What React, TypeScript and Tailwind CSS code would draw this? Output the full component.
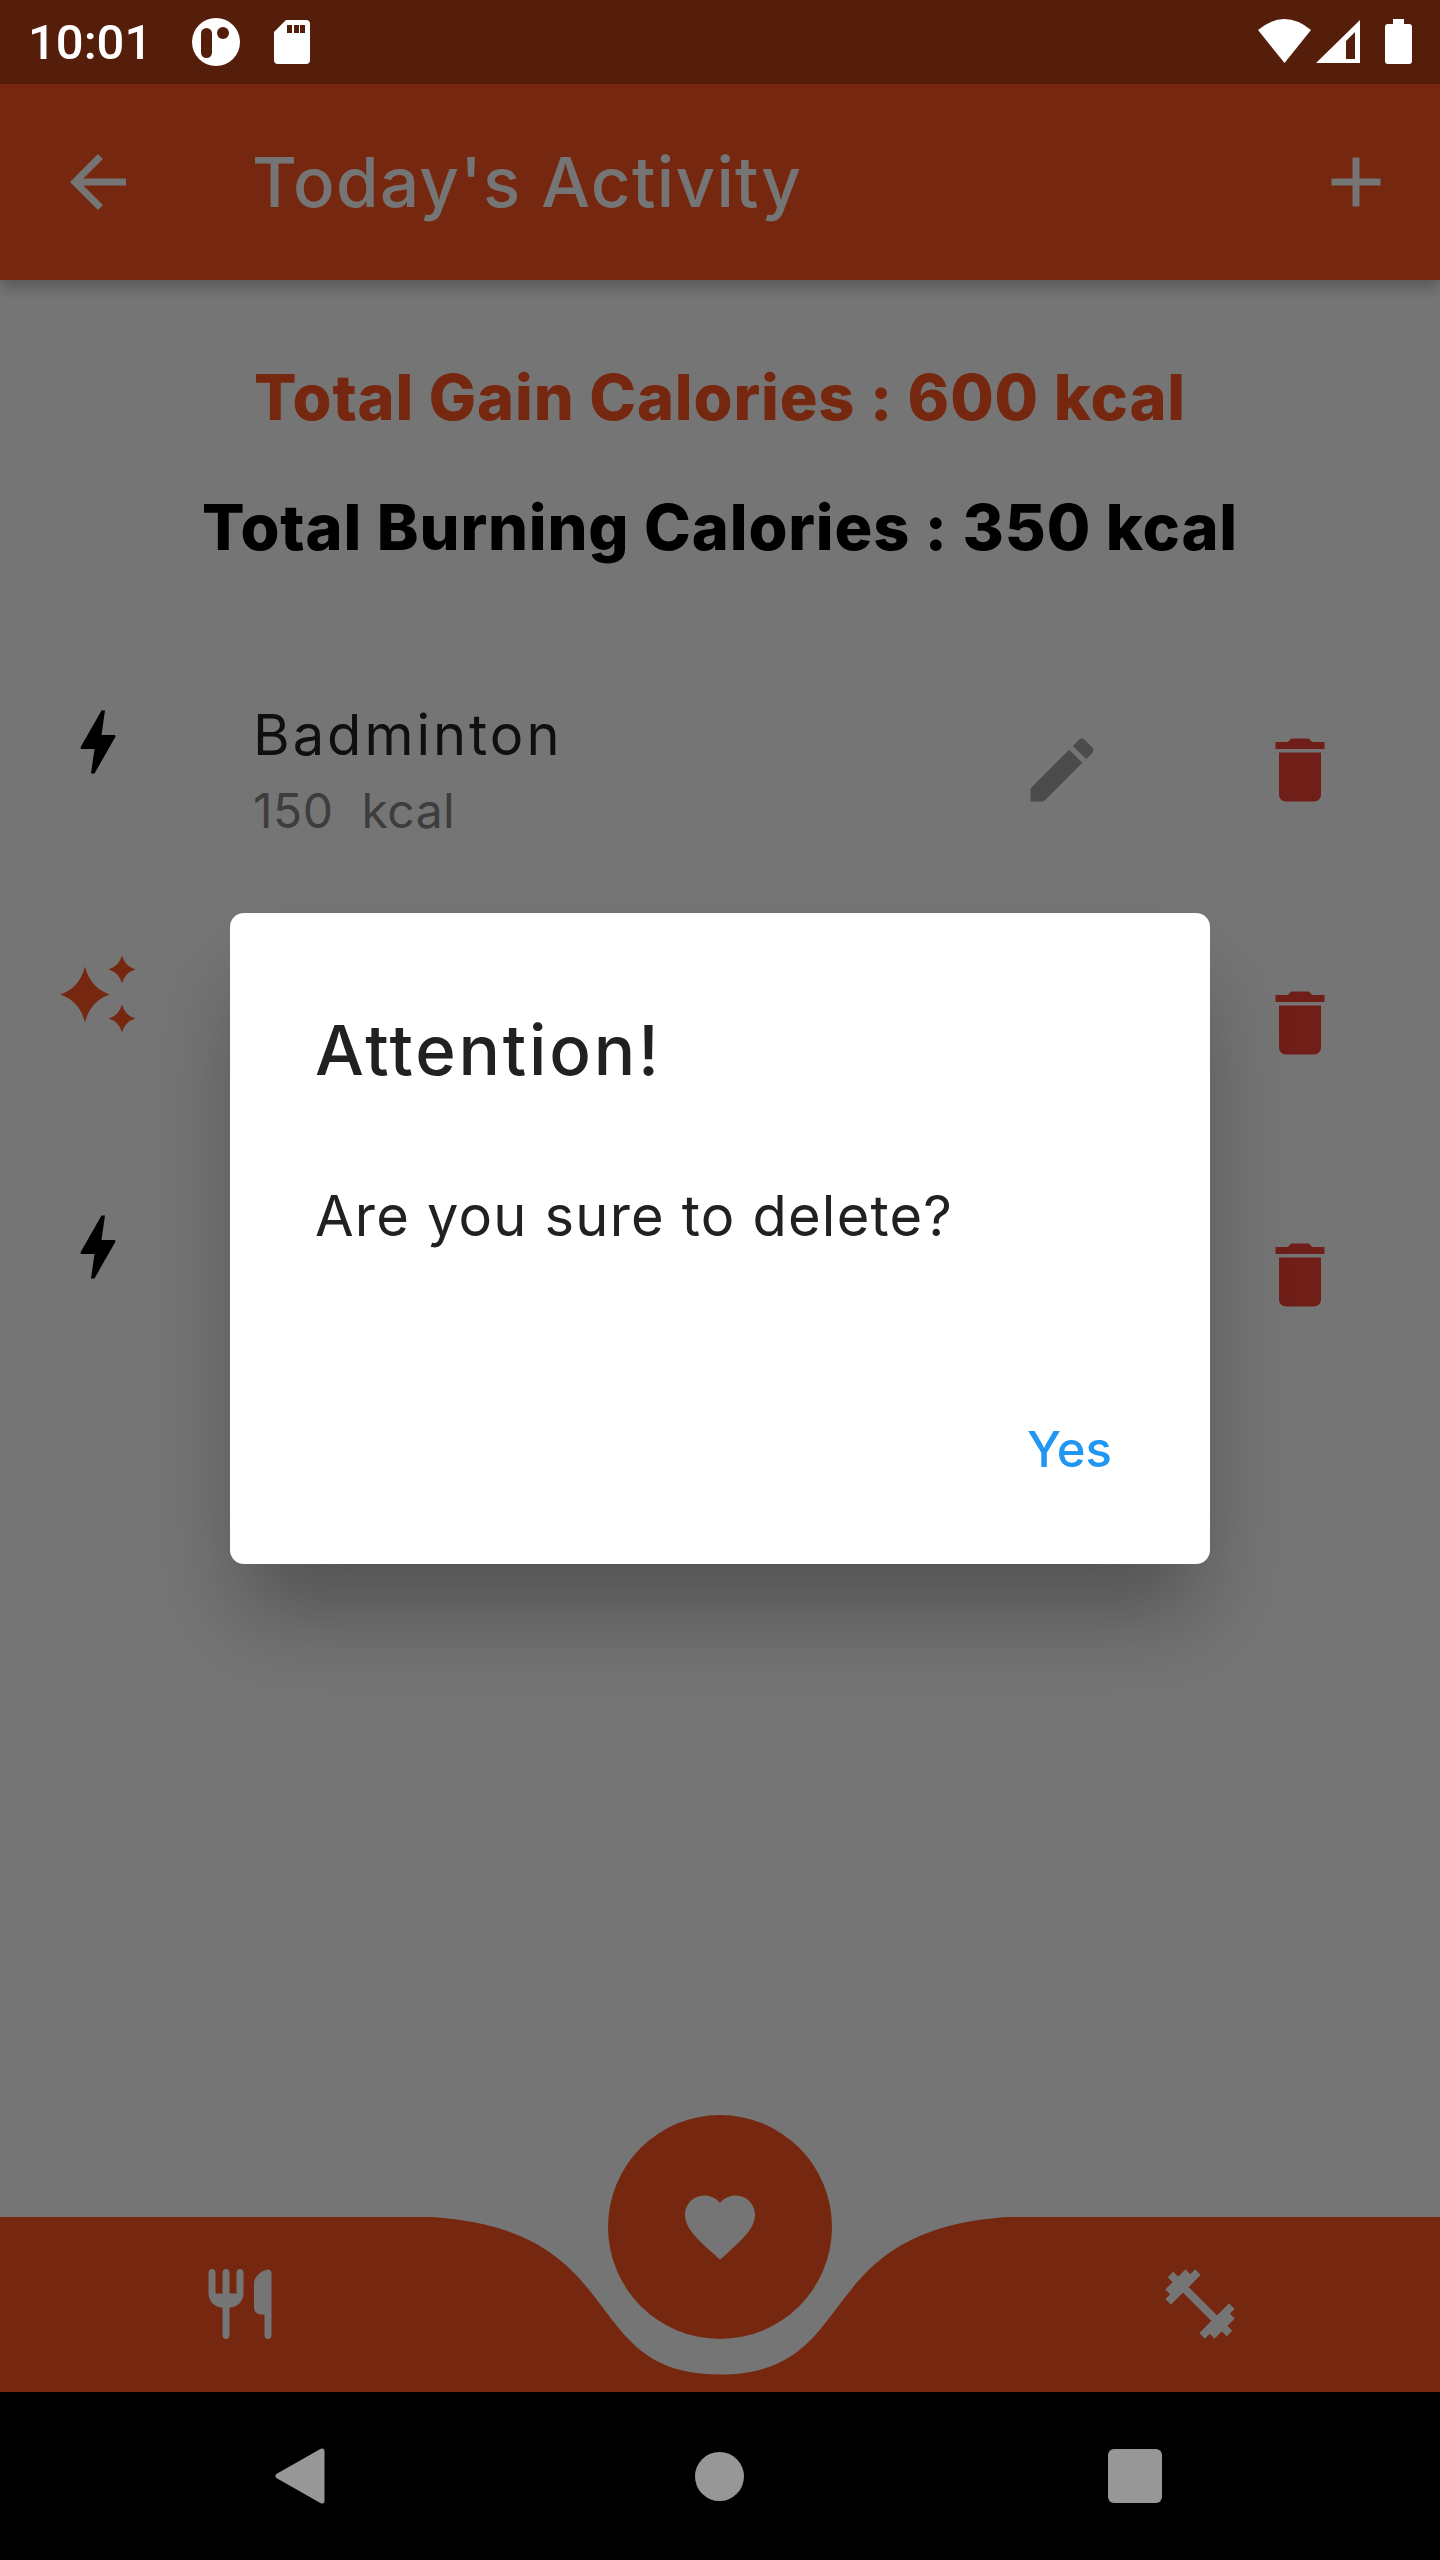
import type { ReactNode } from 'react';

const paths = {
  back: 'M20 11H7.83l5.59-5.59L12 4l-8 8 8 8 1.41-1.41L7.83 13H20v-2z',
  add: 'M19 13h-6v6h-2v-6H5v-2h6V5h2v6h6v2z',
  bolt: 'M11 21h-1l1-7H7.5c-.58 0-.57-.32-.38-.66.19-.34.05-.08.07-.12C8.48 10.94 10.42 7.54 13 3h1l-1 7h3.5c.49 0 .56.33.47.51l-.07.15C12.96 17.55 11 21 11 21z',
  edit: 'M3 17.25V21h3.75L17.81 9.94l-3.75-3.75L3 17.25zM20.71 7.04c.39-.39.39-1.02 0-1.41l-2.34-2.34c-.39-.39-1.02-.39-1.41 0l-1.83 1.83 3.75 3.75 1.83-1.83z',
  trash: 'M6 19c0 1.1.9 2 2 2h8c1.1 0 2-.9 2-2V7H6v12zM19 4h-3.5l-1-1h-5l-1 1H5v2h14V4z',
  heart: 'M12 21.35l-1.45-1.32C5.4 15.36 2 12.28 2 8.5 2 5.42 4.42 3 7.5 3c1.74 0 3.41.81 4.5 2.09C13.09 3.81 14.76 3 16.5 3 19.58 3 22 5.42 22 8.5c0 3.78-3.4 6.86-8.55 11.54L12 21.35z',
  restaurant: 'M16 6v7c0 1.1.9 2 2 2h1v6c0 .55.45 1 1 1s1-.45 1-1V3.13c0-.65-.61-1.13-1.24-.98C17.6 2.68 16 4.51 16 6zm-5 3H9V3c0-.55-.45-1-1-1s-1 .45-1 1v6H5V3c0-.55-.45-1-1-1s-1 .45-1 1v6c0 2.21 1.79 4 4 4v8c0 .55.45 1 1 1s1-.45 1-1v-8c2.21 0 4-1.79 4-4V3c0-.55-.45-1-1-1s-1 .45-1 1v6z',
  fitness: 'M20.57 14.86L22 13.43 20.57 12 17 15.57 8.43 7 12 3.43 10.57 2 9.14 3.43 7.71 2 5.57 4.14 4.14 2.71 2.71 4.14l1.43 1.43L2 7.71l1.43 1.43L2 10.57 3.43 12 7 8.43 15.57 17 12 20.57 13.43 22l1.43-1.43L16.29 22l2.14-2.14 1.43 1.43 1.43-1.43-1.43-1.43L22 16.29z',
};

function Icon({ d, className }: { d: string; className: string }) {
  return (
    <svg viewBox="0 0 24 24" className={`h-[84px] w-[84px] shrink-0 fill-current ${className}`}>
      <path d={d} />
    </svg>
  );
}

// four pointed star with pinched sides
const star = (cx: number, cy: number, rx: number, ry: number) => {
  const kx = rx * 0.22;
  const ky = ry * 0.22;
  return `M${cx} ${cy - ry}Q${cx + kx} ${cy - ky} ${cx + rx} ${cy}Q${cx + kx} ${cy + ky} ${cx} ${cy + ry}Q${cx - kx} ${cy + ky} ${cx - rx} ${cy}Q${cx - kx} ${cy - ky} ${cx} ${cy - ry}Z`;
};

function Sparkles() {
  return (
    <svg viewBox="0 0 84 84" className="h-[84px] w-[84px] shrink-0 fill-[#ff5722]">
      <path d={star(29, 41.5, 25, 28)} />
      <path d={star(66, 16.5, 13.5, 14)} />
      <path d={star(66, 65.5, 13.5, 14)} />
    </svg>
  );
}

function StatusBar() {
  return (
    <div className="flex h-[84px] shrink-0 items-start bg-[#551e0b] text-white">
      <span className="ml-[28px] mt-[15px] font-['Roboto',sans-serif] text-[49px] font-medium leading-[56px]">10:01</span>
      <svg viewBox="0 0 48 48" className="ml-[40px] mt-[18px] h-[48px] w-[48px] fill-white">
        <circle cx="24" cy="24" r="24" />
        <rect x="9" y="10" width="11" height="30" rx="5.5" fill="#551e0b" />
        <circle cx="31" cy="15" r="6" fill="#551e0b" />
      </svg>
      <svg viewBox="0 0 36 44" className="ml-[34px] mt-[20px] h-[44px] w-[36px] fill-white">
        <path d="M12 0H32a4 4 0 0 1 4 4V40a4 4 0 0 1-4 4H4a4 4 0 0 1-4-4V12Z" />
        <path d="M13 5h5v8h-5zM20 5h5v8h-5zM26 5h5v8h-5z" fill="#551e0b" />
      </svg>
      <div className="flex-1" />
      <svg viewBox="0 0 53 44" className="mt-[19px] h-[44px] w-[53px] fill-white">
        <path d="M26.5 44L0 11Q26.5 -11 53 11Z" />
      </svg>
      <svg viewBox="0 0 44 43" className="ml-[5px] mt-[20px] h-[43px] w-[44px] fill-white">
        <path fillRule="evenodd" d="M44 0V43H0ZM39 12L30 21V39H39Z" />
      </svg>
      <svg viewBox="0 0 27 45" className="ml-[25px] mr-[28px] mt-[19px] h-[45px] w-[27px] fill-white">
        <path d="M8 0H19V5H24a3 3 0 0 1 3 3V42a3 3 0 0 1-3 3H3a3 3 0 0 1-3-3V8a3 3 0 0 1 3-3H8Z" />
      </svg>
    </div>
  );
}

function AppBar() {
  return (
    <div className="relative z-10 flex h-[196px] shrink-0 items-center bg-[#ff5722] pl-[56px] pr-[42px] text-white shadow-[0_7px_14px_rgba(0,0,0,0.25)]">
      <Icon d={paths.back} className="" />
      <span className="ml-[112px] flex-1 text-[69px] font-medium leading-[84px] tracking-[1.3px]">Today's Activity</span>
      <Icon d={paths.add} className="" />
    </div>
  );
}

function Row({ icon, children, action }: { icon: ReactNode; children?: ReactNode; action?: ReactNode }) {
  return (
    <div className="flex h-[252.5px] items-start pl-[56px] pr-[98px]">
      {icon}
      {children}
      <div className="flex-1" />
      {action}
      <Icon d={paths.trash} className="mt-[28px] text-[#f44336]" />
    </div>
  );
}

function Activity() {
  return (
    <div className="flex-1">
      <div className="pt-[70px] text-center text-[63px] font-extrabold leading-[94px] tracking-[0.85px]">
        <p className="text-[#ff5722]">Total Gain Calories : 600 kcal</p>
        <p className="mt-[36px] text-black">Total Burning Calories : 350 kcal</p>
      </div>
      <div className="mt-[126px]">
        <Row
          icon={<Icon d={paths.bolt} className="text-black" />}
          action={<Icon d={paths.edit} className="mr-[154px] mt-[28px] text-[#a3a3a3]" />}
        >
          <div className="ml-[113px]">
            <p className="text-[56px] leading-[70px] tracking-[3px] text-[#212121]">Badminton</p>
            <p className="mt-[13px] whitespace-pre text-[48px] leading-[56px] tracking-[0.5px] text-[#858585]">150  kcal</p>
          </div>
        </Row>
        <Row icon={<Sparkles />} />
        <Row icon={<Icon d={paths.bolt} className="text-black" />} />
      </div>
    </div>
  );
}

function BottomBar() {
  return (
    <div className="relative h-[175px] shrink-0">
      <svg viewBox="0 0 1440 175" className="absolute inset-0 h-[175px] w-[1440px] fill-[#ff5722]">
        <path d="M0 0H432C633.6 13.1 576 157.5 720 157.5C864 157.5 806.4 13.1 1008 0H1440V175H0Z" />
      </svg>
      <div className="absolute left-1/2 top-[-102px] flex h-[224px] w-[224px] -translate-x-1/2 items-center justify-center rounded-full bg-[#ff5722] text-white">
        <Icon d={paths.heart} className="" />
      </div>
      <div className="relative flex justify-between pl-[198px] pr-[198px] pt-[45px] text-white">
        <Icon d={paths.restaurant} className="" />
        <Icon d={paths.fitness} className="scale-[0.97] stroke-current stroke-[0.3] [stroke-linejoin:round]" />
      </div>
    </div>
  );
}

function ConfirmDialog() {
  return (
    <div className="absolute inset-0 z-20 flex items-center justify-center bg-black/54">
      <div className="h-[651px] w-[980px] rounded-[14px] bg-white pl-[85px] pr-[98px] pt-[95px] text-[#212121] shadow-[0_60px_90px_-12px_rgba(0,0,0,0.3)]">
        <h2 className="text-[69px] font-medium leading-[84px] tracking-[2.8px]">Attention!</h2>
        <p className="mt-[82px] text-[56px] leading-[84px] tracking-[1.2px]">Are you sure to delete?</p>
        <div className="mt-[157px] flex justify-end">
          <span className="text-[49px] font-medium leading-[70px] text-[#2196f3]">Yes</span>
        </div>
      </div>
    </div>
  );
}

function NavBar() {
  return (
    <div className="flex h-[168px] shrink-0 items-center bg-black pl-[275px]">
      <svg viewBox="0 0 50 56" className="h-[56px] w-[50px] fill-[#979797] stroke-[#979797] stroke-[5] [stroke-linejoin:round]">
        <path d="M47 3V53L3 28Z" />
      </svg>
      <div className="ml-[370px] h-[49px] w-[49px] rounded-full bg-[#979797]" />
      <div className="ml-[364px] h-[54px] w-[54px] rounded-[6px] bg-[#979797]" />
    </div>
  );
}

export default function App() {
  return (
    <div className="flex h-[2560px] w-[1440px] flex-col overflow-hidden bg-white font-['Inter',sans-serif]">
      <StatusBar />
      <div className="relative flex flex-1 flex-col overflow-hidden">
        <AppBar />
        <Activity />
        <BottomBar />
        <ConfirmDialog />
      </div>
      <NavBar />
    </div>
  );
}
